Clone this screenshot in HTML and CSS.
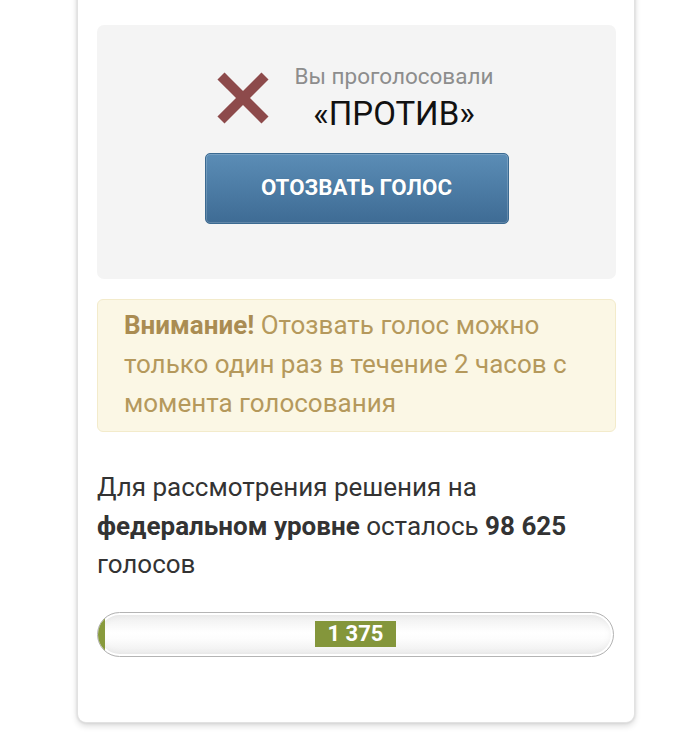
FILE: index.html
```html
<!DOCTYPE html>
<html lang="ru">
<head>
<meta charset="utf-8">
<link rel="stylesheet" href="styles.css">
</head>
<body>
<div class="card">
  <div class="voted">
    <div class="voted-row">
      <svg class="x-icon" width="54" height="54" viewBox="0 0 54 54" aria-hidden="true">
        <line x1="5" y1="5" x2="49" y2="49" stroke="#8d4a4b" stroke-width="10"/>
        <line x1="49" y1="5" x2="5" y2="49" stroke="#8d4a4b" stroke-width="10"/>
      </svg>
      <div class="voted-text">
        <div class="voted-label">Вы проголосовали</div>
        <div class="voted-value">«ПРОТИВ»</div>
      </div>
    </div>
    <button class="revoke">ОТОЗВАТЬ ГОЛОС</button>
  </div>
  <div class="notice"><b>Внимание!</b> Отозвать голос можно только один раз в течение 2 часов с момента голосования</div>
  <p class="remain">Для рассмотрения решения на <b>федеральном уровне</b> осталось <b>98 625</b> голосов</p>
  <div class="progress">
    <div class="progress-fill" style="width:1.4%"></div>
    <span class="progress-label">1 375</span>
  </div>
</div>
</body>
</html>
```
FILE: styles.css
```css
html, body {
  margin: 0;
  padding: 0;
  background: #fff;
}
body {
  font-family: Roboto, "Noto Sans", Arial, sans-serif;
  height: 752px;
  overflow: hidden;
}
.card {
  margin: -10px 0 0 77px;
  width: 558px;
  box-sizing: border-box;
  padding: 35px 18px 65px 19px;
  background: #fff;
  border: 1px solid #e2e2e2;
  border-top: none;
  border-radius: 0 0 9px 9px;
  box-shadow: 0 3px 6px rgba(0,0,0,0.14), 0 0 3px rgba(0,0,0,0.12);
}
.voted {
  background: #f4f4f4;
  border-radius: 7px;
  height: 254px;
  box-sizing: border-box;
  padding-top: 36px;
  display: flex;
  flex-direction: column;
  align-items: center;
}
.voted-row {
  display: flex;
  align-items: center;
  gap: 25px;
  margin-left: -4px;
}
.x-icon {
  display: block;
  filter: blur(0.4px);
}
.voted-text {
  text-align: center;
}
.voted-label {
  font-size: 22.5px;
  line-height: 30px;
  color: #8d8d8d;
}
.voted-value {
  font-size: 33px;
  line-height: 40px;
  color: #111;
  margin-top: 3px;
}
.revoke {
  margin-top: 19px;
  width: 304px;
  height: 71px;
  padding: 0 0 4px 0;
  border: 1px solid #3b6a91;
  border-radius: 5px;
  background: linear-gradient(#5b8db6, #3e6b94);
  box-shadow: inset 0 0 0 1px rgba(255,255,255,0.18);
  color: #fff;
  font-family: Roboto, Arial, sans-serif;
  font-weight: 700;
  font-size: 22.3px;
  text-shadow: 0 0 1px rgba(0,0,0,0.2);
  cursor: pointer;
}
.notice {
  margin-top: 20px;
  background: #fbf7e5;
  border: 1px solid #f3ebcb;
  border-radius: 6px;
  padding: 6px 40px 8px 26px;
  font-size: 26px;
  line-height: 39px;
  color: #b5995c;
}
.notice b {
  font-weight: 700;
  color: #aa8c52;
}
.remain {
  margin: 36px 0 0 0;
  font-size: 26px;
  line-height: 38.5px;
  color: #333;
}
.remain b {
  font-weight: 700;
}
.progress {
  position: relative;
  margin-top: 28px;
  width: 517px;
  height: 45px;
  box-sizing: border-box;
  border: 1px solid #b4b4b4;
  border-radius: 23px;
  background: linear-gradient(#ececec, #ffffff 45%, #fdfdfd 60%, #ececec);
  box-shadow: inset 0 0 0 2px #fff, inset 0 0 8px rgba(0,0,0,0.08);
  overflow: hidden;
}
.progress-fill {
  height: 100%;
  background: #889a3c;
}
.progress-label {
  position: absolute;
  left: 217px;
  top: 8px;
  width: 81px;
  height: 26px;
  background: #84963b;
  color: #fff;
  font-weight: 700;
  font-size: 22px;
  line-height: 26px;
  text-align: center;
}
```
